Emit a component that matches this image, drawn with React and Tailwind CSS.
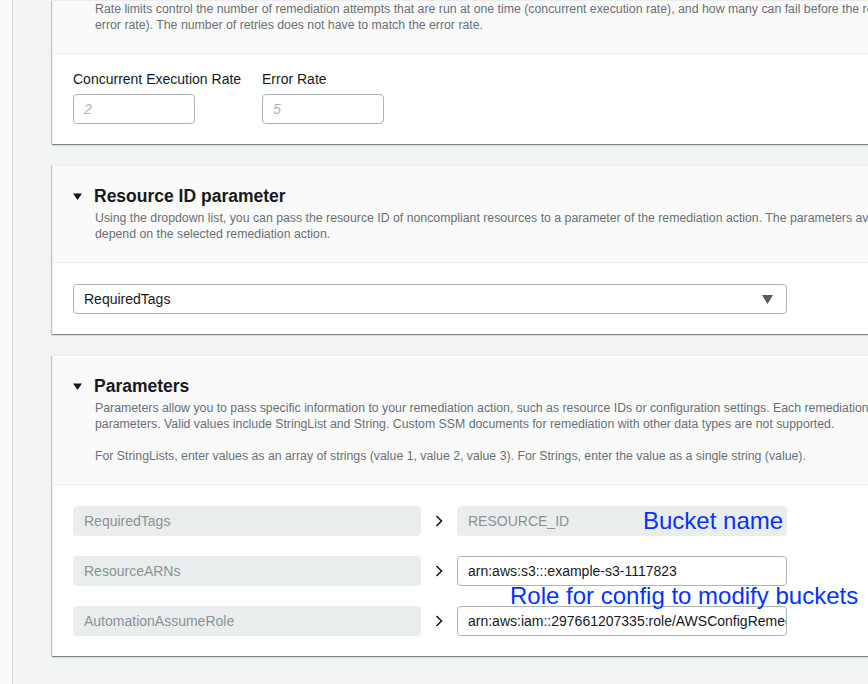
const font = { fontFamily: '"Liberation Sans", Arial, sans-serif' };

function Caret() {
  return (
    <svg width="9" height="7" viewBox="0 0 9 7" className="shrink-0">
      <path d="M0 0.5 L9 0.5 L4.5 7 Z" fill="#16191f" />
    </svg>
  );
}

function Chevron() {
  return (
    <svg width="10" height="12" viewBox="0 0 10 12" className="shrink-0">
      <path d="M2.5 1 L7.5 6 L2.5 11" fill="none" stroke="#16191f" strokeWidth="1.6" />
    </svg>
  );
}

function Panel({ title, lines, children, clipped }) {
  return (
    <section className="w-[1000px] border-l border-t border-[#eaeded] bg-white shadow-[0_1px_1px_0_rgba(0,28,36,0.3),1px_1px_1px_0_rgba(0,28,36,0.15),-1px_1px_1px_0_rgba(0,28,36,0.15)]">
      <header className={`border-b border-[#eaeded] bg-[#fafafa] px-5 pb-5 ${clipped ? "pt-0" : "pt-[19px]"}`}>
        {title && (
          <div className="flex items-center gap-3 leading-[22px]">
            <Caret />
            <h2 className="text-[17.5px] font-bold text-[#16191f]">{title}</h2>
          </div>
        )}
        <div className={`text-[12.3px] leading-4 text-[#687078] ${title ? "pl-[22px] pt-[3px]" : "pl-[22px]"}`}>
          {lines.map((line, i) =>
            line ? (
              <p key={i} className="whitespace-nowrap">{line}</p>
            ) : (
              <div key={i} className="h-4" />
            )
          )}
        </div>
      </header>
      <div className={`px-5 pb-5 ${clipped ? "pt-[15px]" : "pt-[21px]"}`}>{children}</div>
    </section>
  );
}

function ParamRow({ name, value, filled }) {
  return (
    <div className="grid grid-cols-[348px_36px_330px] items-center">
      <div className="flex h-[30px] items-center rounded-sm bg-[#eaeded] px-[11px] text-[14px] text-[#879596]">
        {name}
      </div>
      <div className="flex justify-center">
        <Chevron />
      </div>
      {filled ? (
        <div className="flex h-[30px] items-center overflow-hidden whitespace-nowrap rounded-sm border border-[#aab7b8] bg-white px-[10px] text-[14px] text-[#16191f]">
          {value}
        </div>
      ) : (
        <div className="flex h-[30px] items-center rounded-sm bg-[#eaeded] px-[11px] text-[14px] text-[#879596]">
          {value}
        </div>
      )}
    </div>
  );
}

export default function App() {
  return (
    <div style={font} className="flex h-[684px] w-[868px] overflow-hidden bg-[#f2f3f3]">
      <div className="w-[13px] shrink-0 border-r border-[#d5dbdb] bg-[#fafafa]" />
      <main className="relative flex flex-col gap-[21px] pl-[39px]">
        <Panel
          clipped
          lines={[
            "Rate limits control the number of remediation attempts that are run at one time (concurrent execution rate), and how many can fail before the remediation stops (the",
            "error rate). The number of retries does not have to match the error rate.",
          ]}
        >
          <div className="flex gap-[67px]">
            <label className="flex w-[122px] flex-col gap-[5px]">
              <span className="whitespace-nowrap text-[14px] leading-5 text-[#16191f]">Concurrent Execution Rate</span>
              <span className="flex h-[30px] items-center rounded-sm border border-[#aab7b8] px-[10px] text-[14px] italic text-[#aab7b8]">2</span>
            </label>
            <label className="flex w-[122px] flex-col gap-[5px]">
              <span className="whitespace-nowrap text-[14px] leading-5 text-[#16191f]">Error Rate</span>
              <span className="flex h-[30px] items-center rounded-sm border border-[#aab7b8] px-[10px] text-[14px] italic text-[#aab7b8]">5</span>
            </label>
          </div>
        </Panel>

        <Panel
          title="Resource ID parameter"
          lines={[
            "Using the dropdown list, you can pass the resource ID of noncompliant resources to a parameter of the remediation action. The parameters available",
            "depend on the selected remediation action.",
          ]}
        >
          <div className="flex h-[30px] w-[714px] items-center justify-between rounded-sm border border-[#aab7b8] bg-white pl-[10px] pr-[13px] text-[14px] text-[#16191f]">
            <span>RequiredTags</span>
            <svg width="11" height="9" viewBox="0 0 11 9">
              <path d="M0 0 L11 0 L5.5 9 Z" fill="#545b64" />
            </svg>
          </div>
        </Panel>

        <Panel
          title="Parameters"
          lines={[
            "Parameters allow you to pass specific information to your remediation action, such as resource IDs or configuration settings. Each remediation action has",
            "parameters. Valid values include StringList and String. Custom SSM documents for remediation with other data types are not supported.",
            "",
            "For StringLists, enter values as an array of strings (value 1, value 2, value 3). For Strings, enter the value as a single string (value).",
          ]}
        >
          <div className="relative flex flex-col gap-5">
            <ParamRow name="RequiredTags" value="RESOURCE_ID" />
            <ParamRow name="ResourceARNs" value="arn:aws:s3:::example-s3-1117823" filled />
            <ParamRow name="AutomationAssumeRole" value="arn:aws:iam::297661207335:role/AWSConfigRemediationRole" filled />
            <span className="absolute left-[570px] top-[1px] whitespace-nowrap text-[24px] leading-7 text-[#0433ff]">
              Bucket name
            </span>
            <span className="absolute left-[437px] top-[76px] whitespace-nowrap text-[24px] leading-7 text-[#0433ff]">
              Role for config to modify buckets
            </span>
          </div>
        </Panel>
      </main>
    </div>
  );
}
